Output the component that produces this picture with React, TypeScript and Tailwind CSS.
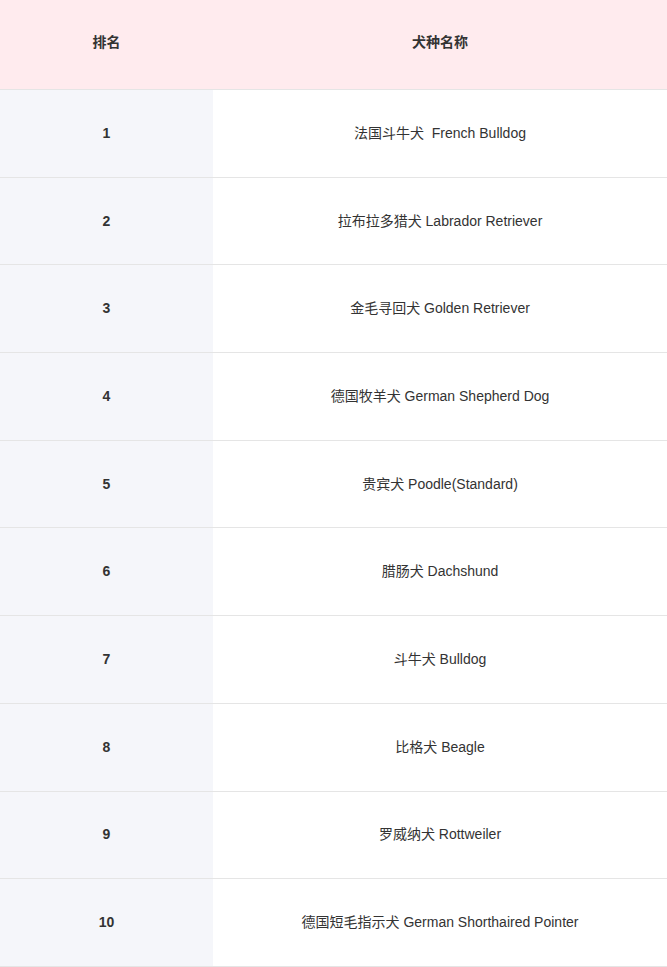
import React from "react";

const rows: [string, string][] = [
  ["1", "法国斗牛犬\u00a0 French Bulldog"],
  ["2", "拉布拉多猎犬 Labrador Retriever"],
  ["3", "金毛寻回犬 Golden Retriever"],
  ["4", "德国牧羊犬 German Shepherd Dog"],
  ["5", "贵宾犬 Poodle(Standard)"],
  ["6", "腊肠犬 Dachshund"],
  ["7", "斗牛犬 Bulldog"],
  ["8", "比格犬 Beagle"],
  ["9", "罗威纳犬 Rottweiler"],
  ["10", "德国短毛指示犬 German Shorthaired Pointer"],
];

export default function App() {
  return (
    <div
      className="w-[667px] bg-white text-[#333] text-[14px]"
      style={{ fontFamily: '"Liberation Sans", Arial, "Noto Sans CJK SC", sans-serif' }}
    >
      <div className="flex h-[90px] pb-[4px] bg-[#ffebee] border-b border-[#e5e5e5] font-bold text-[14px]">
        <div className="w-[213px] flex items-center justify-center">排名</div>
        <div className="flex-1 flex items-center justify-center">犬种名称</div>
      </div>
      {rows.map(([n, name]) => (
        <div key={n} className="flex h-[87.7px] border-b border-[#e5e5e5]">
          <div className="w-[213px] bg-[#f5f6fa] flex items-center justify-center font-bold">{n}</div>
          <div className="flex-1 flex items-center justify-center">{name}</div>
        </div>
      ))}
    </div>
  );
}
